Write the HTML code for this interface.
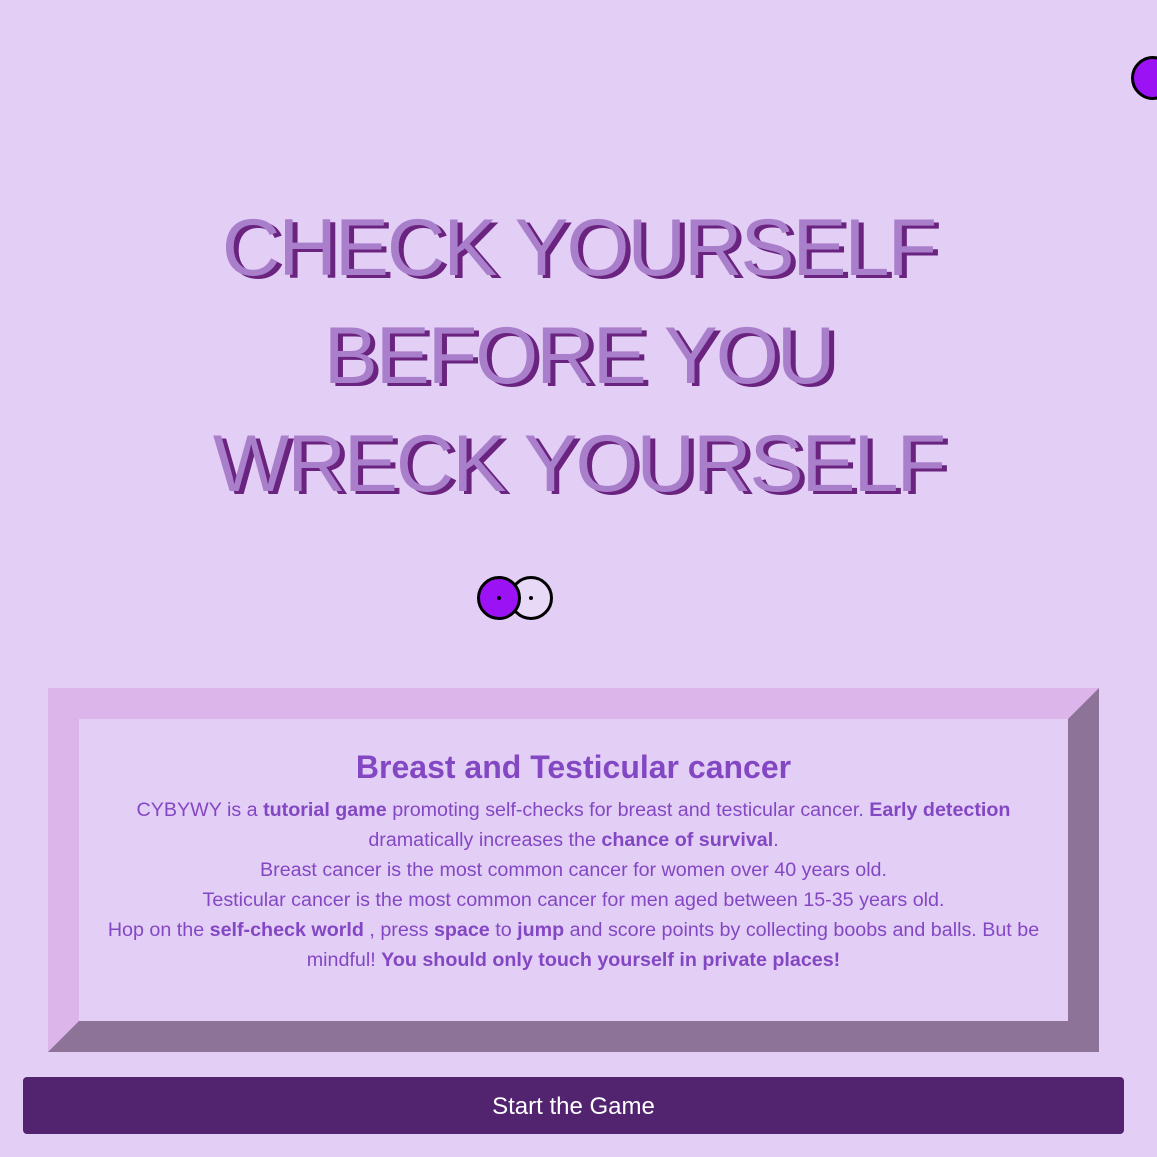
<!DOCTYPE html>
<html><head><style>
body{margin:0;background:#e3cff5;width:1157px;height:1157px;overflow:hidden;position:relative;font-family:"Liberation Sans",sans-serif;}
.title{position:absolute;top:194px;left:0;width:1157px;text-align:center;font-size:81px;line-height:108px;letter-spacing:-2px;color:#a97fcb;text-shadow:5px 3px 0 #6a237f;}
.c{position:absolute;width:38px;height:38px;border:3px solid #000;border-radius:50%;}
.c i{position:absolute;left:17px;top:17px;width:4px;height:4px;background:#000;border-radius:50%;}
.box{position:absolute;left:48px;top:688px;width:989px;height:302px;border:31px solid;border-color:#dcb6ea #8e7399 #8e7399 #dcb6ea;text-align:center;color:#8447c4;}
.box h2{margin:30px 0 9px;font-size:32px;font-weight:600;}
.box p{margin:0;font-size:19.7px;line-height:30px;}
.btn{position:absolute;left:23px;top:1077px;width:1101px;height:57px;background:#52246f;border-radius:4px;color:#fff;font-size:24px;line-height:59px;text-align:center;}
</style></head><body>
<div class="title">CHECK YOURSELF<br>BEFORE YOU<br>WRECK YOURSELF</div>
<div class="c" style="left:1131px;top:56px;background:#9b12f5"></div>
<div class="c" style="left:509px;top:576px;background:#e8d9f7"><i></i></div>
<div class="c" style="left:477px;top:576px;background:#9b12f5"><i></i></div>
<div class="box">
<h2>Breast and Testicular cancer</h2>
<p>CYBYWY is a <b>tutorial game</b> promoting self-checks for breast and testicular cancer. <b>Early detection</b><br>dramatically increases the <b>chance of survival</b>.<br>Breast cancer is the most common cancer for women over 40 years old.<br>Testicular cancer is the most common cancer for men aged between 15-35 years old.<br>Hop on the <b>self-check world</b> , press <b>space</b> to <b>jump</b> and score points by collecting boobs and balls. But be<br>mindful! <b>You should only touch yourself in private places!</b></p>
</div>
<div class="btn">Start the Game</div>
</body></html>
